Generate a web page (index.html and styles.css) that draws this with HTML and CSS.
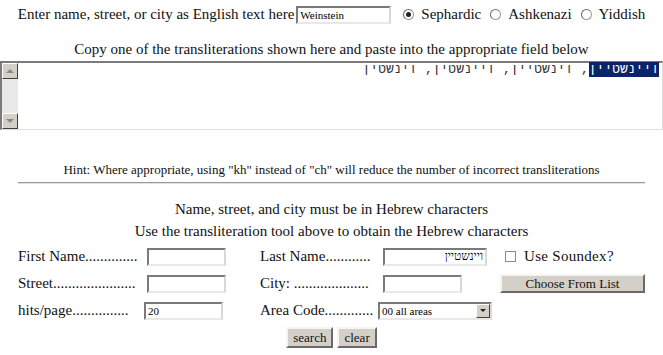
FILE: index.html
```html
<!DOCTYPE html>
<html lang="en">

<head>
  <meta charset="UTF-8">
  <title>Hebrew transliteration search</title>
  <link rel="stylesheet" href="styles.css">
</head>

<body>
  <form class="translit">
    <div class="entry">
      <span>Enter name, street, or city as English text here</span>
      <input class="field english" type="text" value="Weinstein">
      <label class="opt"><input class="radio" type="radio" name="dialect" checked>Sephardic</label>
      <label class="opt"><input class="radio" type="radio" name="dialect">Ashkenazi</label>
      <label class="opt"><input class="radio" type="radio" name="dialect">Yiddish</label>
    </div>
    <p class="copy">Copy one of the transliterations shown here and paste into the appropriate field below</p>
    <div class="result">
      <div class="scrollbar">
        <div class="arrow up"></div>
        <div class="track"></div>
        <div class="arrow down"></div>
      </div>
      <div class="output" dir="rtl"><span class="picked">ויינשטיין</span>, וינשטיין, ויינשטין, וינשטין</div>
    </div>
    <p class="hint">Hint: Where appropriate, using "kh" instead of "ch" will reduce the number of incorrect transliterations</p>
  </form>

  <hr class="rule">

  <form class="search">
    <p class="note">Name, street, and city must be in Hebrew characters</p>
    <p class="note">Use the transliteration tool above to obtain the Hebrew characters</p>
    <div class="grid">
      <span class="lbl">First Name..............</span>
      <input class="field" type="text">
      <span class="lbl">Last Name............</span>
      <input class="field hebrew" type="text" dir="rtl" value="ויינשטיין">
      <label class="opt soundex"><input class="check" type="checkbox">Use Soundex?</label>

      <span class="lbl">Street......................</span>
      <input class="field" type="text">
      <span class="lbl">City: ....................</span>
      <input class="field" type="text">
      <button class="btn choose" type="button">Choose From List</button>

      <span class="lbl">hits/page...............</span>
      <input class="field hits" type="text" value="20">
      <span class="lbl">Area Code.............</span>
      <span class="select-wrap">
        <select class="area">
          <option>00 all areas</option>
        </select>
        <span class="drop"></span>
      </span>
    </div>
    <div class="actions">
      <button class="btn" type="submit">search</button>
      <button class="btn" type="reset">clear</button>
    </div>
  </form>
</body>

</html>
```

FILE: styles.css
```css
* {
  margin: 0;
  padding: 0;
  box-sizing: border-box;
}

body {
  width: 663px;
  height: 355px;
  overflow: hidden;
  background: #fff;
  color: #111;
  font-family: "Liberation Serif", "Times New Roman", serif;
  font-size: 15px;
}

/* top tool */
.entry {
  display: flex;
  justify-content: center;
  align-items: center;
  height: 28px;
  padding-top: 1px;
}

.entry>span {
  margin-right: 2px;
}

.field {
  height: 18px;
  border: 2px solid;
  border-color: #7a7a7a #d8d8d8 #e8e8e8 #7a7a7a;
  background: #fff;
  font-family: "Liberation Serif", serif;
  font-size: 11px;
  padding: 0 2px;
  outline: none;
}

.english {
  width: 95px;
  margin-right: 12px;
}

.opt {
  display: flex;
  align-items: center;
  margin-right: 9px;
}

.opt:last-child {
  margin-right: 0;
}

.radio {
  appearance: none;
  width: 11px;
  height: 11px;
  border-radius: 50%;
  border: 1px solid #9a9a9a;
  border-top-color: #6a6a6a;
  border-left-color: #6a6a6a;
  margin-right: 7px;
  position: relative;
}

.radio:checked::after {
  content: "";
  position: absolute;
  left: 2px;
  top: 2px;
  width: 5px;
  height: 5px;
  border-radius: 50%;
  background: #222;
}

.copy {
  text-align: center;
  line-height: 20px;
  margin: 11px 0 2px;
}

.result {
  display: flex;
  height: 69px;
  border-top: 2px solid #7a7a7a;
  border-left: 2px solid #7a7a7a;
  border-right: 1px solid #e0e0e0;
  border-bottom: 1px solid #e0e0e0;
}

.scrollbar {
  width: 16px;
  display: flex;
  flex-direction: column;
  background: #e9e9e9;
}

.arrow {
  height: 16px;
  background: #d4d0c8;
  border: 1px solid;
  border-color: #fff #404040 #404040 #fff;
  position: relative;
}

.arrow::after {
  content: "";
  position: absolute;
  left: 3px;
  border-left: 4px solid transparent;
  border-right: 4px solid transparent;
}

.up::after {
  top: 5px;
  border-bottom: 4px solid #888;
}

.down::after {
  top: 5px;
  border-top: 4px solid #888;
}

.track {
  flex: 1;
}

.output {
  flex: 1;
  font-family: "Liberation Mono", "DejaVu Sans Mono", monospace;
  font-size: 13px;
  line-height: 14px;
  color: #333;
  padding-right: 3px;
}

.picked {
  background: #0a246a;
  color: #fff;
}

.hint {
  text-align: center;
  font-size: 13px;
  line-height: 16px;
  margin-top: 32px;
}

.rule {
  margin: 4px 18px 0;
  border: 0;
  border-top: 1px solid #9a9a9a;
  border-bottom: 1px solid #e0e0e0;
}

/* search form */
.search {
  padding-top: 14px;
}

.note {
  text-align: center;
  line-height: 22px;
}

.grid {
  display: grid;
  grid-template-columns: 129px 113px 123px 117px 143px;
  grid-auto-rows: 27px;
  align-items: center;
  padding-left: 18px;
  margin-top: 1px;
}

.grid .field {
  width: 79px;
}

.grid .hebrew {
  width: 104px;
  font-size: 12px;
}

.grid .hits {
  margin-left: -3px;
}

.soundex {
  margin-left: 5px;
  letter-spacing: 0.3px;
}

.check {
  appearance: none;
  width: 11px;
  height: 11px;
  border: 1px solid #8a8a8a;
  margin-right: 8px;
}

.btn {
  height: 19px;
  background: #d4d0c8;
  border: 2px solid;
  border-color: #f4f4f4 #6a6a6a #6a6a6a #f4f4f4;
  font-family: "Liberation Serif", serif;
  font-size: 13px;
  color: #111;
  padding: 0 5px;
}

.choose {
  width: 145px;
}

.select-wrap {
  position: relative;
  width: 114px;
  height: 18px;
  margin-left: -5px;
}

.area {
  appearance: none;
  width: 100%;
  height: 100%;
  border: 2px solid;
  border-color: #7a7a7a #d8d8d8 #e8e8e8 #7a7a7a;
  background: #fff;
  font-family: "Liberation Serif", serif;
  font-size: 11px;
  padding-left: 2px;
}

.drop {
  position: absolute;
  right: 2px;
  top: 2px;
  width: 14px;
  height: 14px;
  background: #d4d0c8;
  border: 1px solid;
  border-color: #fff #404040 #404040 #fff;
}

.drop::after {
  content: "";
  position: absolute;
  left: 3px;
  top: 4px;
  border-left: 3px solid transparent;
  border-right: 3px solid transparent;
  border-top: 3px solid #222;
}

.actions {
  display: flex;
  justify-content: center;
  gap: 4px;
  margin-top: 3px;
}

.actions .btn {
  height: 21px;
}
```
